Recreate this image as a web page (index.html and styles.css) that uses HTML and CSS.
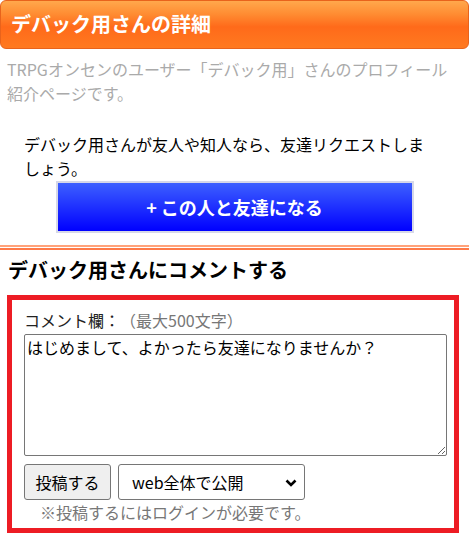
FILE: index.html
```html
<!DOCTYPE html>
<html lang="ja">
  <head>
    <meta charset="UTF-8" />
    <meta name="viewport" content="width=device-width, initial-scale=1.0" />
    <title>デバック用さんの詳細</title>
    <link rel="stylesheet" href="styles.css">
  </head>
  <body>
    <h1 class="page-title">デバック用さんの詳細</h1>
    <p class="page-desc">TRPGオンセンのユーザー「デバック用」さんのプロフィール紹介ページです。</p>

    <p class="friend-text">デバック用さんが友人や知人なら、友達リクエストしましょう。</p>
    <button class="friend-btn" type="button">+ この人と友達になる</button>

    <hr class="double-line" />

    <h2 class="comment-title">デバック用さんにコメントする</h2>

    <form class="comment-box">
      <label class="comment-label" for="comment">コメント欄：<span class="limit">（最大500文字）</span></label>
      <textarea id="comment" class="comment-input">はじめまして、よかったら友達になりませんか？</textarea>
      <div class="comment-actions">
        <button class="post-btn" type="button">投稿する</button>
        <span class="select-wrap">
          <select class="scope">
            <option>web全体で公開</option>
            <option>友達まで公開</option>
          </select>
          <!-- chevron drawn over the select -->
          <svg class="chevron" width="12" height="8" viewBox="0 0 12 8">
            <path d="M1.5 1.5 L6 6 L10.5 1.5" fill="none" stroke="#000" stroke-width="2.6" />
          </svg>
        </span>
      </div>
      <p class="login-note">※投稿するにはログインが必要です。</p>
    </form>
  </body>
</html>
```

FILE: styles.css
```css
*,
*::before,
*::after {
  box-sizing: border-box;
}

body {
  margin: 0;
  font-family: "Noto Sans CJK JP", "Noto Sans", sans-serif;
  font-size: 16px;
  color: #000;
  background-color: #fff;
  text-spacing-trim: space-all;
}

/* Header bar */

.page-title {
  margin: 0;
  height: 49px;
  padding-left: 10px;
  font-size: 20px;
  line-height: 46px;
  font-weight: bold;
  color: #fff;
  border: 1px solid #e8631c;
  border-radius: 6px;
  background: linear-gradient(#ffa84c, #ff8c32 28%, #ff6a1a 55%, #ff7a20 100%);
}

.page-desc {
  margin: 8px 0 0;
  padding: 0 7px;
  line-height: 24px;
  color: #aaa;
}

/* Friend request */

.friend-text {
  width: 432px;
  margin: 27px 0 0;
  padding-left: 24px;
  line-height: 24px;
}

.friend-btn {
  display: block;
  width: 358px;
  height: 52px;
  margin: 1px auto 0;
  font-family: inherit;
  font-size: 18px;
  font-weight: bold;
  color: #fff;
  border: 2px solid #d6d8e8;
  background: linear-gradient(#3d60ff, #0000ff);
  cursor: pointer;
}

.double-line {
  height: 5px;
  margin: 12px 0 0;
  border: none;
  border-top: 2px solid #ffa27a;
  border-bottom: 2px solid #ff7a48;
  background-color: #fff;
}

/* Comment area */

.comment-title {
  margin: 8px 0 0;
  padding-left: 8px;
  font-size: 20px;
  line-height: 24px;
  font-weight: bold;
}

.comment-box {
  margin: 13px 10px 14px 7px;
  padding: 8px 0 4px 12px;
  border: 5px solid #ed1c24;
}

.comment-label {
  display: block;
  line-height: 24px;
  color: #222;
}

.limit {
  color: #777;
}

.comment-input {
  display: block;
  width: 423px;
  height: 122px;
  margin-top: 2px;
  padding: 2px;
  font-family: inherit;
  font-size: 16px;
  line-height: 20px;
  border: 1px solid #767676;
  border-radius: 2px;
  resize: vertical;
}

.comment-actions {
  display: flex;
  gap: 7px;
  margin-top: 8px;
}

.post-btn {
  width: 87px;
  height: 36px;
  font-family: inherit;
  font-size: 16px;
  color: #000;
  background-color: #efefef;
  border: 1px solid #767676;
  border-radius: 3px;
  padding: 0;
}

.select-wrap {
  position: relative;
  display: block;
}

.scope {
  appearance: none;
  width: 187px;
  height: 36px;
  padding-left: 13px;
  font-family: inherit;
  font-size: 16px;
  color: #000;
  background-color: #fff;
  border: 1px solid #767676;
  border-radius: 3px;
}

.chevron {
  position: absolute;
  top: 15px;
  right: 8px;
  pointer-events: none;
}

.login-note {
  margin: 0;
  padding-left: 16px;
  line-height: 24px;
  color: #777;
}
```
